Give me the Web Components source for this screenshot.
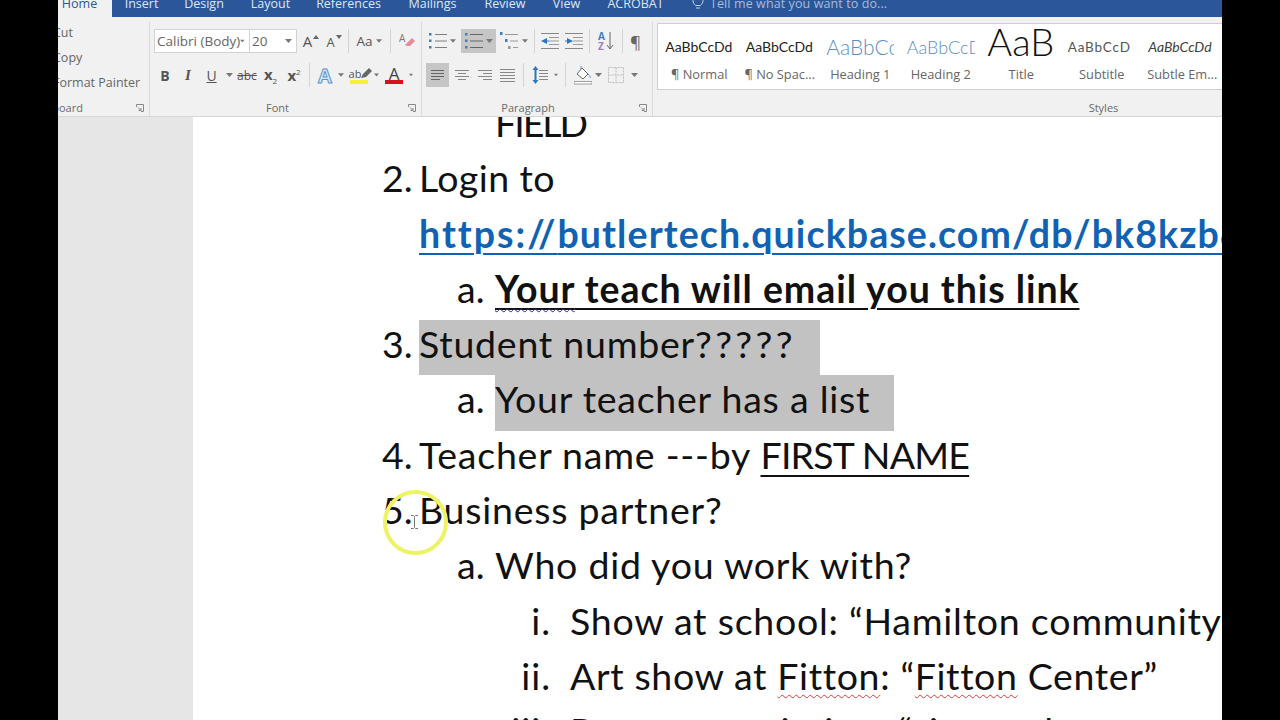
<!DOCTYPE html>
<html>
<head>
<meta charset="utf-8">
<title>Word document</title>
<style>
  html, body { margin: 0; height: 100%; background: #000; overflow: hidden; }
  body { display: flex; justify-content: center; font-family: "Open Sans", "Liberation Sans", sans-serif; }
  .link { color: #0f62b4; font-weight: 700; letter-spacing: 1.1px; text-decoration: underline; text-decoration-thickness: 2px; text-underline-offset: 5px; }
  .proto { letter-spacing: 2px; }
  .ul { text-decoration: underline; text-decoration-thickness: 2px; text-underline-offset: 6px; }
  b.ul { letter-spacing: .94px; text-underline-offset: 5px; }
  .caps { letter-spacing: -.8px; }
  .field { letter-spacing: -2px; }
  .qq { letter-spacing: 3.4px; }
  .tight { letter-spacing: .62px; }
  .grammar { text-decoration: underline wavy #2a2a9a 1px; text-underline-offset: 5px; }
  .sel { display: inline-block; height: 55.3px; line-height: 47.3px; background: #c2c2c2; }
  .spell { text-decoration: underline wavy #d0403a 1px; text-underline-offset: 4px; }
</style>
</head>
<body>
<word-window>
  <word-tabs></word-tabs>
  <word-ribbon></word-ribbon>
  <word-doc>
    <doc-line level="2"><span class="field">FIELD</span></doc-line>
    <doc-line level="1" marker="2."><span style="letter-spacing:.4px">Login to</span></doc-line>
    <doc-line level="1"><a class="link"><span class="proto">https://</span>butlertech.quickbase.com/db/bk8kzb8ab</a></doc-line>
    <doc-line level="2" marker="a."><b class="ul"><span class="grammar">Your</span> teach will email you this link</b></doc-line>
    <doc-line level="1" marker="3."><span class="sel" style="width:401px">Student number<span class="qq">?????</span></span></doc-line>
    <doc-line level="2" marker="a."><span class="sel" style="width:399px">Your teacher has a list</span></doc-line>
    <doc-line level="1" marker="4.">Teacher name ---by <span class="ul caps">FIRST NAME</span></doc-line>
    <doc-line level="1" marker="5.">Business partner?</doc-line>
    <doc-line level="2" marker="a.">Who did you work with?</doc-line>
    <doc-line level="3" marker="i.">Show at school: “Hamilton community”</doc-line>
    <doc-line level="3" marker="ii."><span class="tight">Art show at <span class="spell">Fitton</span>: “<span class="spell">Fitton</span> Center”</span></doc-line>
    <doc-line level="3" marker="iii.">Parent permission: “sign and</doc-line>
  </word-doc>
</word-window>

<script>
const CARET = '<svg width="7" height="4" viewBox="0 0 7 4"><path d="M0 0h7L3.5 4z" fill="#777"/></svg>';

class RbTool extends HTMLElement {
  constructor() {
    super();
    this.attachShadow({mode: 'open'});
    const w = this.getAttribute('w') || 24;
    this.shadowRoot.innerHTML = `
      <style>
        :host { display: flex; flex: none; width: ${w}px; height: 24px; align-items: center; justify-content: center; position: relative; color: #555; font-size: 14px; }
        :host([on]) { background: #c6c6c6; }
        :host([sep])::after { content: ""; width: 1px; height: 24px; background: #d4d4d4; }
      </style>
      <slot></slot>`;
    if (this.hasAttribute('caret')) this.innerHTML = CARET;
  }
}
customElements.define('rb-tool', RbTool);

class RibbonGroup extends HTMLElement {
  constructor() {
    super();
    this.attachShadow({mode: 'open'});
    this.shadowRoot.innerHTML = `
      <style>
        :host { display: flex; flex-direction: column; flex: none; box-sizing: border-box; height: 94px; border-right: 1px solid #d9d9d9; position: relative; overflow: hidden; }
        .body { flex: 1; min-height: 0; }
        .label { height: 17px; line-height: 17px; font-size: 11px; color: #6b6b6b; text-align: center; }
        svg { position: absolute; right: 5px; bottom: 4px; }
      </style>
      <div class="body"><slot></slot></div>
      <div class="label" part="label">${this.getAttribute('label') || ''}</div>
      ${this.hasAttribute('launcher') ? '<svg width="8" height="8" viewBox="0 0 8 8" fill="none" stroke="#888"><path d="M.5 3V.5H7.5V7.5H5M2 3.5l3 3M5 4v2.5H2.5"/></svg>' : ''}`;
  }
}
customElements.define('ribbon-group', RibbonGroup);

class WordTabs extends HTMLElement {
  constructor() {
    super();
    this.attachShadow({mode: 'open'});
    const tabs = [['Insert', 59], ['Design', 66], ['Layout', 67], ['References', 89], ['Mailings', 79], ['Review', 66], ['View', 57], ['ACROBAT', 81]];
    this.shadowRoot.innerHTML = `
      <style>
        :host { display: flex; height: 17px; background: #2b579a; overflow: hidden; font-size: 12.5px; color: #dfe7f3; }
        span { flex: none; display: block; height: 14px; line-height: 14px; margin-top: -3px; text-align: center; }
        .home { width: 54px; height: 17px; margin: 0; background: #f1f1f1; color: #2b579a; box-sizing: border-box; padding-right: 11px; line-height: 8px; }
        .tell { margin-left: 6px; color: #a9bcd9; letter-spacing: .1px; }
        svg { flex: none; margin: -4px 0 0 16px; }
      </style>
      <span class="home">Home</span>
      ${tabs.map(([t, w]) => `<span style="width:${w}px">${t}</span>`).join('')}
      <svg width="12" height="16" viewBox="0 0 12 16" fill="none" stroke="#c4d2e6"><path d="M3.5 9.5C2 8 1 6.5 1 4.5a5 5 0 0 1 10 0c0 2-1 3.5-2.5 5zM4 12h4"/></svg>
      <span class="tell">Tell me what you want to do...</span>`;
  }
}
customElements.define('word-tabs', WordTabs);

class WordRibbon extends HTMLElement {
  constructor() {
    super();
    this.attachShadow({mode: 'open'});
    const lines = (ys, x1, x2, c) => ys.map(y => `<path d="M${x1} ${y}H${x2}" stroke="${c || '#7d7d7d'}"/>`).join('');
    const icon = (w, inner) => `<svg width="${w}" height="20" viewBox="0 0 ${w} 20" fill="none">${inner}</svg>`;
    const dots = (c) => [3, 9.5, 16].map(y => `<rect x="0" y="${y - 1}" width="2.5" height="2.5" fill="${c}"/>`).join('');
    const styles = [
      ['AaBbCcDd', '¶ Normal', ''],
      ['AaBbCcDd', '¶ No Spac...', ''],
      ['AaBbCc', 'Heading 1', 'h1'],
      ['AaBbCcD', 'Heading 2', 'h2'],
      ['AaB', 'Title', 'ttl'],
      ['AaBbCcD', 'Subtitle', 'sub'],
      ['AaBbCcDd', 'Subtle Em...', 'em']
    ];
    this.shadowRoot.innerHTML = `
      <style>
        :host { display: flex; height: 100px; box-sizing: border-box; padding-top: 5px; background: #f1f1f1; border-bottom: 1px solid #d6d6d6; color: #5a5a5a; overflow: hidden; }
        .clip { width: 92px; }
        .clip .items { display: flex; flex-direction: column; gap: 7px; padding-top: 2px; margin-left: -5px; font-size: 12.5px; line-height: 18px; white-space: nowrap; color: #666; }
        .clip::part(label) { text-align: left; margin-left: -25px; }
        .font { width: 272px; padding-left: 4px; }
        .font::part(label) { padding-right: 20px; }
        .para { width: 231px; }
        .para::part(label) { padding-right: 18px; }
        .row { display: flex; align-items: center; height: 24px; }
        .r1 { margin-top: 7px; }
        .r2 { margin-top: 10px; }
        .para .r1 { padding-left: 3px; }
        .para .r2 { padding-left: 4px; }
        .combo { flex: none; box-sizing: border-box; height: 24px; background: #fff; border: 1px solid #d2d2d2; display: flex; align-items: center; justify-content: space-between; font-size: 13.5px; padding: 0 4px 0 2px; color: #666; white-space: nowrap; overflow: hidden; }
        .combo + .combo { border-left: 0; }
        .stack { display: flex; flex-direction: column; align-items: center; line-height: 13px; font-size: 16px; font-family: "Open Sans", sans-serif; }
        .bar { display: block; width: 18px; height: 4px; margin-top: 0; }
        .styles { flex: 1; min-width: 0; border-right: 0; }
        .styles::part(label) { padding-left: 332px; }
        .gallery { margin: 1px 0 0 4px; box-sizing: border-box; height: 67px; background: #fff; border: 1px solid #cfcfcf; border-right: 0; display: flex; padding-left: 1px; }
        .cell { flex: none; width: 80.5px; display: flex; flex-direction: column; align-items: center; overflow: hidden; }
        .cell b { display: block; width: 68px; overflow: hidden; font-weight: 400; height: 40px; line-height: 46px; font-family: Lato, "Open Sans", sans-serif; font-size: 14px; color: #222; white-space: nowrap; }
        .cell span { font-size: 12.8px; line-height: 20px; color: #666; white-space: nowrap; }
        .cell .h1 { font-size: 21px; color: #5b8fc4; font-weight: 300; }
        .cell .h2 { font-size: 18px; color: #5b8fc4; font-weight: 300; }
        .cell .ttl { font-size: 38px; color: #111; font-weight: 300; line-height: 34px; height: 40px; }
        .cell .sub { color: #555; letter-spacing: .8px; font-size: 13.5px; }
        .cell .em { font-style: italic; color: #404040; }
      </style>

      <ribbon-group class="clip" label="Clipboard" launcher>
        <div class="items"><span>Cut</span><span>Copy</span><span>Format Painter</span></div>
      </ribbon-group>

      <ribbon-group class="font" label="Font" launcher>
        <div class="row r1">
          <div class="combo" style="width:96px"><span>Calibri (Body)</span>${CARET}</div>
          <div class="combo" style="width:47px"><span>20</span>${CARET}</div>
          <rb-tool w="28"><span style="font-size:15px">A</span><svg width="6" height="4" style="margin:-9px 0 0 1px"><path d="M0 4l3-4 3 4z" fill="#666"/></svg></rb-tool>
          <rb-tool w="18"><span style="font-size:13px;margin-top:2px">A</span><svg width="6" height="4" style="margin:-9px 0 0 1px"><path d="M0 0l3 4 3-4z" fill="#666"/></svg></rb-tool>
          <rb-tool w="10" sep></rb-tool>
          <rb-tool w="23"><span style="font-size:13.5px">Aa</span></rb-tool>
          <rb-tool w="6" caret></rb-tool>
          <rb-tool w="16" sep></rb-tool>
          <rb-tool w="18">${icon(16, '<text x="0" y="11" font-size="10" fill="#777" font-family="Open Sans">A</text><path d="M6 14l7-7 3 3-5 5H8z" fill="#e58b9c"/>')}</rb-tool>
        </div>
        <div class="row r2">
          <rb-tool w="22"><b>B</b></rb-tool>
          <rb-tool w="24"><i style="font-family:'Liberation Serif',serif;font-weight:700;font-size:15px">I</i></rb-tool>
          <rb-tool w="23"><u>U</u></rb-tool>
          <rb-tool w="12" caret></rb-tool>
          <rb-tool w="24"><s style="font-size:12px">abc</s></rb-tool>
          <rb-tool w="23"><b style="font-size:15px">x<sub style="font-size:8px;font-weight:400">2</sub></b></rb-tool>
          <rb-tool w="24"><b style="font-size:15px">x<sup style="font-size:8px;font-weight:400">2</sup></b></rb-tool>
          <rb-tool w="6" sep></rb-tool>
          <rb-tool w="26"><span style="font-size:20px;font-weight:700;color:#d7e6f6;-webkit-text-stroke:1px #5d93cc">A</span></rb-tool>
          <rb-tool w="6" caret></rb-tool>
          <rb-tool w="30"><span class="stack" style="position:relative"><span style="font-size:11px;margin-right:8px">ab</span><svg width="12" height="10" style="position:absolute;right:-3px;top:1px"><path d="M1 10l2-4 6-6 3 3-6 6z" fill="#666"/></svg><span class="bar" style="background:#f5f03c"></span></span></rb-tool>
          <rb-tool w="5" caret></rb-tool>
          <rb-tool w="30"><span class="stack"><span style="font-size:17px;color:#444">A</span><span class="bar" style="background:#d2121c"></span></span></rb-tool>
          <rb-tool w="4" caret></rb-tool>
        </div>
      </ribbon-group>

      <ribbon-group class="para" label="Paragraph" launcher>
        <div class="row r1">
          <rb-tool w="25">${icon(18, dots('#3f7fc2') + lines([3.5, 10, 16.5], 6, 18))}</rb-tool>
          <rb-tool w="6" caret></rb-tool>
          <rb-tool w="5"></rb-tool>
          <rb-tool w="35" on>${icon(18, dots('#3f7fc2') + lines([3.5, 10, 16.5], 5, 18, '#666'))}<span style="margin-left:3px;display:flex">${CARET}</span></rb-tool>
          <rb-tool w="26">${icon(18, '<rect x="0" y="1" width="2.5" height="3" fill="#3f7fc2"/><rect x="5" y="8" width="2.5" height="3" fill="#3f7fc2"/><rect x="8" y="15" width="2.5" height="3" fill="#999"/>' + '<path d="M5 3.5H18M10 10H18M13 16.5H18" stroke="#999"/>')}</rb-tool>
          <rb-tool w="6" caret></rb-tool>
          <rb-tool w="12" sep></rb-tool>
          <rb-tool w="20">${icon(18, lines([2.5, 17.5], 0, 18, '#888') + lines([6.5, 10, 13.5], 8, 18, '#999') + '<path d="M6 7v6L0 10z" fill="#2e77bc"/><path d="M5 9.5h3v1H5z" fill="#2e77bc"/>')}</rb-tool>
          <rb-tool w="27">${icon(18, lines([2.5, 17.5], 0, 18, '#888') + lines([6.5, 10, 13.5], 8, 18, '#999') + '<path d="M2 7v6l6-3z" fill="#2e77bc"/><path d="M0 9.5h3v1H0z" fill="#2e77bc"/>')}</rb-tool>
          <rb-tool w="4" sep></rb-tool>
          <rb-tool w="29"><span style="position:relative;display:flex">${icon(16, '<text x="0" y="9" font-size="10" font-weight="700" fill="#3f7fc2" font-family="Open Sans">A</text><text x="0" y="19" font-size="10" font-weight="700" fill="#a07cc0" font-family="Open Sans">Z</text><path d="M12 1v16M9 14l3 4 3-4" stroke="#666"/>')}</span></rb-tool>
          <rb-tool w="4" sep></rb-tool>
          <rb-tool w="23"><span style="font-size:17px;color:#666">¶</span></rb-tool>
        </div>
        <div class="row r2">
          <rb-tool w="23" on>${icon(13, lines([5.5, 8.5, 11.5], 0, 13, '#666') + lines([14.5], 0, 9, '#666'))}</rb-tool>
          <rb-tool w="26">${icon(14, lines([5.5, 11.5], 0, 14, '#888') + lines([8.5, 14.5], 3, 11, '#888'))}</rb-tool>
          <rb-tool w="20">${icon(14, lines([5.5, 11.5], 0, 14, '#888') + lines([8.5, 14.5], 5, 14, '#888'))}</rb-tool>
          <rb-tool w="25">${icon(15, lines([4.5, 7.5, 10.5, 13.5, 16.5], 0, 15, '#888'))}</rb-tool>
          <rb-tool w="6" sep></rb-tool>
          <rb-tool w="28">${icon(16, lines([5.5, 8.5, 11.5, 14.5], 7, 16, '#888') + '<path d="M3.5 1L6.5 5h-2v10h2l-3 4-3-4h2V5h-2z" fill="#2e77bc"/>')}</rb-tool>
          <rb-tool w="4" caret></rb-tool>
          <rb-tool w="14" sep></rb-tool>
          <rb-tool w="22">${icon(18, '<path d="M3 9l5-6 6 6-5 5z" fill="#fff" stroke="#666"/><path d="M7 1v3M14 9c2 2 3 3 2 4" stroke="#5d93cc"/><path d="M0 16.5h18V19H0z" fill="#fff" stroke="#888" stroke-width=".8"/>')}</rb-tool>
          <rb-tool w="8" caret></rb-tool>
          <rb-tool w="28">${icon(16, '<path d="M.5 2.5h15v15H.5zM8 2.5v15M.5 10h15" stroke="#bdbdbd" stroke-dasharray="2 1"/>')}</rb-tool>
          <rb-tool w="8" caret></rb-tool>
        </div>
      </ribbon-group>

      <ribbon-group class="styles" label="Styles">
        <div class="gallery">
          ${styles.map(([s, n, c]) => `<div class="cell"><b class="${c}">${s}</b><span>${n}</span></div>`).join('')}
        </div>
      </ribbon-group>`;
  }
}
customElements.define('word-ribbon', WordRibbon);

class DocLine extends HTMLElement {
  constructor() {
    super();
    this.attachShadow({mode: 'open'});
    const marker = this.getAttribute('marker') || '';
    this.shadowRoot.innerHTML = `
      <style>
        :host { display: flex; height: 55.3px; line-height: 55.3px; white-space: nowrap; }
        :host([level="1"]) { padding-left: 189px; }
        :host([level="2"]) { padding-left: 264px; }
        :host([level="3"]) { padding-left: 307px; }
        .m { flex: none; width: 37px; letter-spacing: 0; }
        :host([level="2"]) .m { width: 38px; }
        :host([level="3"]) .m { width: 51px; padding-right: 19px; text-align: right; letter-spacing: 1px; }
        .t { display: block; }
      </style>
      <span class="m">${marker}</span><span class="t"><slot></slot></span>`;
  }
}
customElements.define('doc-line', DocLine);

class WordDoc extends HTMLElement {
  constructor() {
    super();
    this.attachShadow({mode: 'open'});
    this.shadowRoot.innerHTML = `
      <style>
        :host { display: flex; flex: 1; min-height: 0; background: #e6e6e6; overflow: hidden; }
        .page { flex: 1; margin-left: 135px; background: #fff; position: relative; overflow: hidden; font: 37.5px/55.3px Lato, "Open Sans", sans-serif; letter-spacing: .75px; color: #111; }
        .flow { margin-top: -22px; }
        .ring { position: absolute; left: 190px; top: 373px; width: 65px; height: 65px; box-sizing: border-box; border: 4.5px solid #eef265; border-radius: 50%; }
        .beam { position: absolute; left: 218px; top: 398px; }
      </style>
      <div class="page">
        <div class="flow"><slot></slot></div>
        <div class="ring"></div>
        <svg class="beam" width="7" height="14" viewBox="0 0 7 14" fill="none" stroke="#777"><path d="M0 .5h2.5L3.5 1.5 4.5 .5H7M3.5 1.5v11M0 13.5h2.5L3.5 12.5 4.5 13.5H7"/></svg>
      </div>`;
  }
}
customElements.define('word-doc', WordDoc);

class WordWindow extends HTMLElement {
  constructor() {
    super();
    this.attachShadow({mode: 'open'});
    this.shadowRoot.innerHTML = `
      <style>
        :host { display: flex; flex-direction: column; flex: none; width: 1164px; height: 720px; overflow: hidden; }
      </style>
      <slot></slot>`;
  }
}
customElements.define('word-window', WordWindow);
</script>
</body>
</html>
